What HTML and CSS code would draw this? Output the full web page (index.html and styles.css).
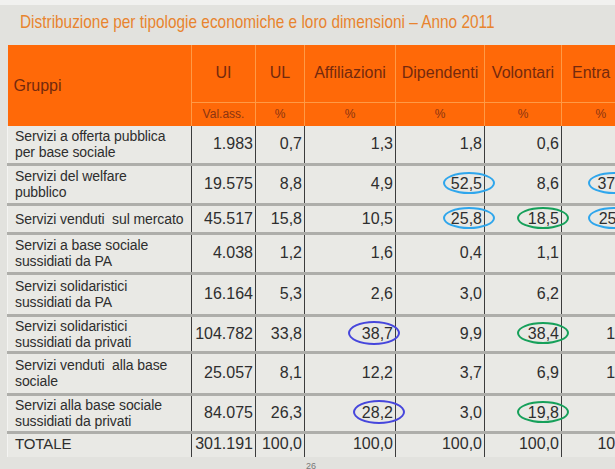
FILE: index.html
```html
<!DOCTYPE html>
<html lang="it">
<head>
<meta charset="utf-8">
<link rel="stylesheet" href="styles.css">
</head>
<body>
<div class="slide">
  <h1 class="title">Distribuzione per tipologie economiche e loro dimensioni – Anno 2011</h1>
  <table class="grid">
    <colgroup>
      <col class="c-grp"><col class="c-ui"><col class="c-ul"><col class="c-aff"><col class="c-dip"><col class="c-vol"><col class="c-ent">
    </colgroup>
    <thead>
      <tr class="h1">
        <th rowspan="2" class="grp">Gruppi</th>
        <th>UI</th><th>UL</th><th>Affiliazioni</th><th>Dipendenti</th><th>Volontari</th><th class="ent">Entra</th>
      </tr>
      <tr class="h2">
        <th>Val.ass.</th><th>%</th><th>%</th><th>%</th><th>%</th><th>%</th>
      </tr>
    </thead>
    <tbody>
      <tr class="r38"><td class="lbl">Servizi a offerta pubblica<br>per base sociale</td><td>1.983</td><td>0,7</td><td>1,3</td><td>1,8</td><td>0,6</td><td></td></tr>
      <tr class="r40"><td class="lbl">Servizi del welfare<br>pubblico</td><td>19.575</td><td>8,8</td><td>4,9</td><td><span class="v">52,5</span><span class="ring blue r-dip"></span></td><td>8,6</td><td><span class="v">37,33</span><span class="ring blue r-ent"></span></td></tr>
      <tr class="r29"><td class="lbl">Servizi venduti&nbsp; sul mercato</td><td>45.517</td><td>15,8</td><td>10,5</td><td><span class="v">25,8</span><span class="ring blue r-dip"></span></td><td><span class="v">18,5</span><span class="ring green r-vol"></span></td><td><span class="v">25,11</span><span class="ring blue r-ent"></span></td></tr>
      <tr class="r40"><td class="lbl">Servizi a base sociale<br>sussidiati da PA</td><td>4.038</td><td>1,2</td><td>1,6</td><td>0,4</td><td>1,1</td><td></td></tr>
      <tr class="r42"><td class="lbl">Servizi solidaristici<br>sussidiati da PA</td><td>16.164</td><td>5,3</td><td>2,6</td><td>3,0</td><td>6,2</td><td></td></tr>
      <tr class="r37"><td class="lbl">Servizi solidaristici<br>sussidiati da privati</td><td>104.782</td><td>33,8</td><td><span class="v">38,7</span><span class="ring violet r-aff1"></span></td><td>9,9</td><td><span class="v">38,4</span><span class="ring green r-vol"></span></td><td>14,5</td></tr>
      <tr class="r42"><td class="lbl">Servizi venduti&nbsp; alla base<br>sociale</td><td>25.057</td><td>8,1</td><td>12,2</td><td>3,7</td><td>6,9</td><td>12,1</td></tr>
      <tr class="r38"><td class="lbl">Servizi alla base sociale<br>sussidiati da privati</td><td>84.075</td><td>26,3</td><td><span class="v">28,2</span><span class="ring violet r-aff2"></span></td><td>3,0</td><td><span class="v">19,8</span><span class="ring green r-vol"></span></td><td></td></tr>
      <tr class="r25 tot"><td class="lbl">TOTALE</td><td>301.191</td><td>100,0</td><td>100,0</td><td>100,0</td><td>100,0</td><td>100,0</td></tr>
    </tbody>
  </table>
  <div class="pagenum">26</div>
</div>
</body>
</html>
```

FILE: styles.css
```css
html, body {
  margin: 0;
  padding: 0;
}
body {
  width: 615px;
  height: 469px;
  overflow: hidden;
  background: #e2e2de;
  font-family: "Liberation Sans", Arial, sans-serif;
}
.slide {
  border-top: 5px solid #f1f1ef;
  padding: 5px 0 0 0;
}
.title {
  width: max-content;
  margin: 0 0 11px 20px;
  font-size: 19px;
  line-height: 24px;
  font-weight: normal;
  color: #e8842e;
  white-space: nowrap;
  transform: scaleX(0.81);
  transform-origin: left center;
}
.grid {
  margin-left: 7px;
  width: 632px;
  table-layout: fixed;
  border-collapse: collapse;
  color: #2e2e2e;
}
.c-grp { width: 184px; }
.c-ui { width: 64px; }
.c-ul { width: 49px; }
.c-aff { width: 91px; }
.c-dip { width: 89px; }
.c-vol { width: 77px; }
.c-ent { width: 78px; }

.grid th {
  background: #ff6908;
  color: #74290e;
  font-weight: normal;
  border-left: 1px solid #ff9a45;
  padding: 0;
}
.grid th.grp {
  text-align: left;
  padding-left: 6px;
  font-size: 16px;
  border-left: none;
}
.h1 { height: 57px; }
.h1 th { font-size: 16px; }
.h1 th.ent { text-align: left; padding-left: 10px; }
.h2 { height: 24px; }
.h2 th {
  font-size: 12px;
  border-top: 1px solid #ff9a45;
  color: #8a3412;
}

.grid td {
  background: #e9e9e5;
  border-top: 3px solid #aeaeaa;
  border-left: 1px solid #3c3c3c;
  padding: 0 2px 0 0;
  text-align: right;
  font-size: 16px;
  position: relative;
  white-space: nowrap;
}
.grid tbody tr:first-child td { border-top: none; }
.grid td.lbl {
  text-align: left;
  border-left: 1px solid #f4f4f2;
  padding: 0 0 0 7px;
  font-size: 14px;
  line-height: 16px;
  letter-spacing: -0.1px;
}
.r38 { height: 38px; }
.r40 { height: 40px; }
.r29 { height: 29px; }
.r42 { height: 42px; }
.r37 { height: 37px; }
.r25 { height: 25px; }
.tot td.lbl { font-size: 15px; vertical-align: top; padding-top: 2px; }
.tot td { vertical-align: top; padding-top: 1px; }

.v { position: relative; z-index: 3; }
.ring {
  position: absolute;
  z-index: 2;
  top: 50%;
  width: 52px;
  height: 22px;
  margin-top: -12px;
  border: 2px solid;
  border-radius: 50%;
  box-sizing: border-box;
  pointer-events: none;
}
.blue { border-color: #2fa6ec; }
.green { border-color: #16a05a; }
.violet { border-color: #4646dc; height: 24px; margin-top: -13px; }
.r-dip { right: -11px; }
.r-vol { right: -8px; }
.r-aff1 { right: -5px; }
.r-aff2 { right: -10px; }
.r-ent { left: 26px; }

.pagenum {
  margin: 4px 0 0 306px;
  font-size: 9px;
  color: #777;
}
```
